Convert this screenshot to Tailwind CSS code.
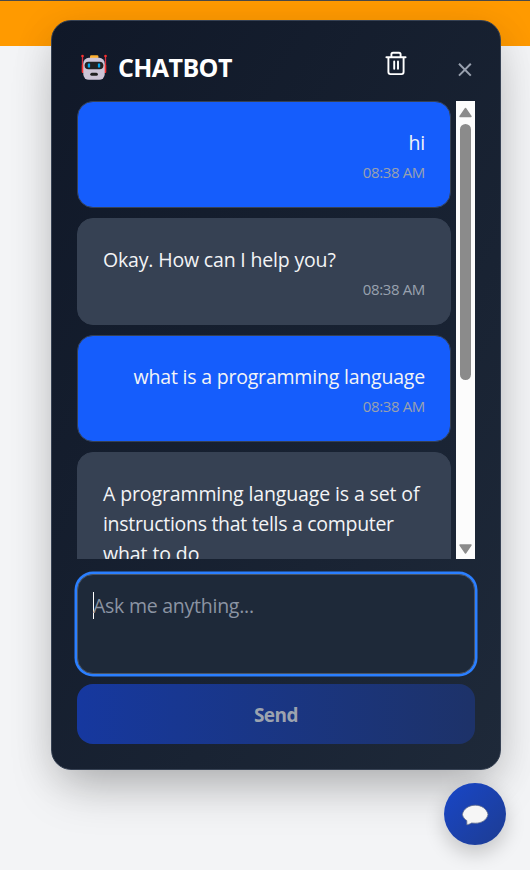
<!DOCTYPE html>
<html lang="en">
<head>
<meta charset="utf-8">
<title>Chatbot</title>
<script src="https://cdn.jsdelivr.net/npm/@tailwindcss/browser@4"></script>
</head>
<body class="relative h-[870px] w-[530px] overflow-hidden bg-[#f3f4f6] font-['Open_Sans','Noto_Sans',sans-serif]">
<header class="h-[46px] border-t border-[#4a4a4a] bg-[#ff9a00]"></header>

<section class="absolute left-[51px] top-5 flex h-[750px] w-[450px] flex-col rounded-[20px] border border-[#364153] bg-linear-to-br from-[#101828] to-[#1e2939] px-[25px] pb-[25px] pt-[25px] shadow-[0_25px_50px_-12px_rgba(0,0,0,0.25),0_8px_40px_rgba(0,0,0,0.1)]">
  <div class="flex h-[55px] shrink-0 items-start">
    <svg class="ml-[4px] mt-[8px] h-[27px] w-[27px] shrink-0" viewBox="0 0 27 27">
      <path d="M1.5 2v17M24.5 2v17" stroke="#d32f3f" stroke-width="1.3"/>
      <circle cx="1.5" cy="2" r="1.3" fill="#f8312f"/><circle cx="24.5" cy="2" r="1.3" fill="#f8312f"/>
      <rect x=".8" y="10" width="3" height="9" rx="1.5" fill="#f8312f"/><rect x="22.2" y="10" width="3" height="9" rx="1.5" fill="#f8312f"/>
      <rect x="9" y="1.2" width="8.4" height="4" rx="1.2" fill="#ffb02e"/>
      <rect x="2.3" y="3.8" width="21.4" height="22" rx="5.5" fill="#cdc4d6"/>
      <rect x="3.6" y="7.7" width="18.8" height="7.6" rx="3.8" fill="#212121"/>
      <rect x="6.8" y="9.4" width="2.3" height="4.2" rx=".5" fill="#00a6ed"/><rect x="16.9" y="9.4" width="2.3" height="4.2" rx=".5" fill="#00a6ed"/>
      <rect x="9.3" y="18.7" width="7.6" height="3" rx="1.5" fill="#212121"/>
    </svg>
    <h1 class="ml-[10px] mt-[3px] w-[130px] text-[25px] font-bold leading-[36px] tracking-[-0.6px] text-white">CHATBOT</h1>
    <svg class="ml-[137px] mt-[4px] h-[26px] w-[22px] shrink-0" viewBox="0 0 22 26" fill="none" stroke="#fff" stroke-width="1.9" stroke-linecap="round" stroke-linejoin="round">
      <path d="M1.4 7.2h19.2M3.4 7.2v14.9q0 2 2 2h11.2q2 0 2-2V7.2M6.4 7V4.4q0-1.6 1.6-1.6h6q1.6 0 1.6 1.6V7M9.2 11.5v7.2M13 11.5v7.2"/>
    </svg>
    <svg class="ml-[51px] mt-[17px] h-[14px] w-[14px] shrink-0" viewBox="0 0 14 14" fill="none" stroke="#99a1af" stroke-width="2"><path d="M1 .8 12.8 12.600M12.8 .8 1 12.600"/></svg>
  </div>

  <div class="flex h-[458px] shrink-0 justify-between overflow-hidden">
    <div class="flex w-[374px] flex-col gap-[10px] text-[19.500px] leading-[30px] text-[#f3f4f6]">
      <div class="h-[107px] shrink-0 rounded-[16px] border border-[#364153] bg-[#155dfc] px-[25px] pt-[26px] text-right">
        <p class="tracking-[-0.2px]">hi</p>
        <p class="text-[15px] leading-[29px] tracking-[-0.35px] text-[#99a1af]">08:38 AM</p>
      </div>
      <div class="h-[107px] shrink-0 rounded-[16px] border border-[#364153] bg-[#364153] px-[25px] pt-[26px]">
        <p class="tracking-[-0.17px]">Okay. How can I help you?</p>
        <p class="text-right text-[15px] leading-[29px] tracking-[-0.35px] text-[#99a1af]">08:38 AM</p>
      </div>
      <div class="h-[107px] shrink-0 rounded-[16px] border border-[#364153] bg-[#155dfc] px-[25px] pt-[26px] text-right">
        <p class="whitespace-nowrap tracking-[-0.2px]">what is a programming language</p>
        <p class="text-[15px] leading-[29px] tracking-[-0.35px] text-[#99a1af]">08:38 AM</p>
      </div>
      <div class="h-[177px] shrink-0 whitespace-nowrap rounded-[16px] border border-[#364153] bg-[#364153] px-[25px] pt-[26px]">
        <p><span class="tracking-[-0.12px]">A programming language is a set of</span><br><span class="tracking-[-0.3px]">instructions that tells a computer</span><br><span class="tracking-[-0.1px]">what to do</span></p>
      </div>
    </div>
    <div class="flex w-[19px] flex-col items-center bg-[#fcfcfc]">
      <svg class="h-[23px] w-[19px] shrink-0" viewBox="0 0 19 23"><path d="M9.5 7.500 15 15.500H4z" fill="#8b8b8b" stroke="#8b8b8b" stroke-width="1.4" stroke-linejoin="round"/></svg>
      <div class="h-[256px] w-[11px] shrink-0 rounded-full bg-[#8b8b8b]"></div>
      <svg class="mt-auto h-[19px] w-[19px] shrink-0" viewBox="0 0 19 19"><path d="M4 5h11L9.5 13z" fill="#8b8b8b" stroke="#8b8b8b" stroke-width="1.4" stroke-linejoin="round"/></svg>
    </div>
  </div>

  <div class="mt-[15px] flex h-[100px] shrink-0 items-start rounded-[16px] border border-[#4a5565] bg-[#1e2939] px-[15px] pt-[16px] ring-[2.5px] ring-[#2b7fff]">
    <span class="mt-px h-[27px] w-px shrink-0 bg-white"></span>
    <span class="-ml-px text-[19.500px] leading-[30px] tracking-[-0.25px] text-[#8b94a3]">Ask me anything...</span>
  </div>
  <button class="mt-[10px] h-[60px] shrink-0 rounded-[16px] bg-linear-to-r from-[#16389f] to-[#1d3269] pt-[2px] text-[19px] font-bold leading-[30px] tracking-[-0.5px] text-[#9ca3af]">Send</button>
</section>

<button class="absolute left-[444px] top-[783px] flex h-[62px] w-[62px] items-center justify-center rounded-full bg-linear-to-br from-[#1846c8] to-[#1d3c92] shadow-[0_8px_20px_rgba(0,0,0,0.2)]">
  <svg class="h-[24px] w-[28px]" viewBox="0 0 28 24"><path d="M14.3 3.200C20.500 3.200 26 7 27 12.400 26 17.800 20.800 21.200 14.300 21.200L10.500 21C9.400 21.800 8 22.200 5.900 22.900L5.800 18.600C3.500 17.100 1.700 14.800 1.400 12.400 2.500 6.700 8 3.200 14.300 3.200z" fill="#f6f6f6" stroke="#64708c" stroke-width=".8"/></svg>
</button>
</body>
</html>
